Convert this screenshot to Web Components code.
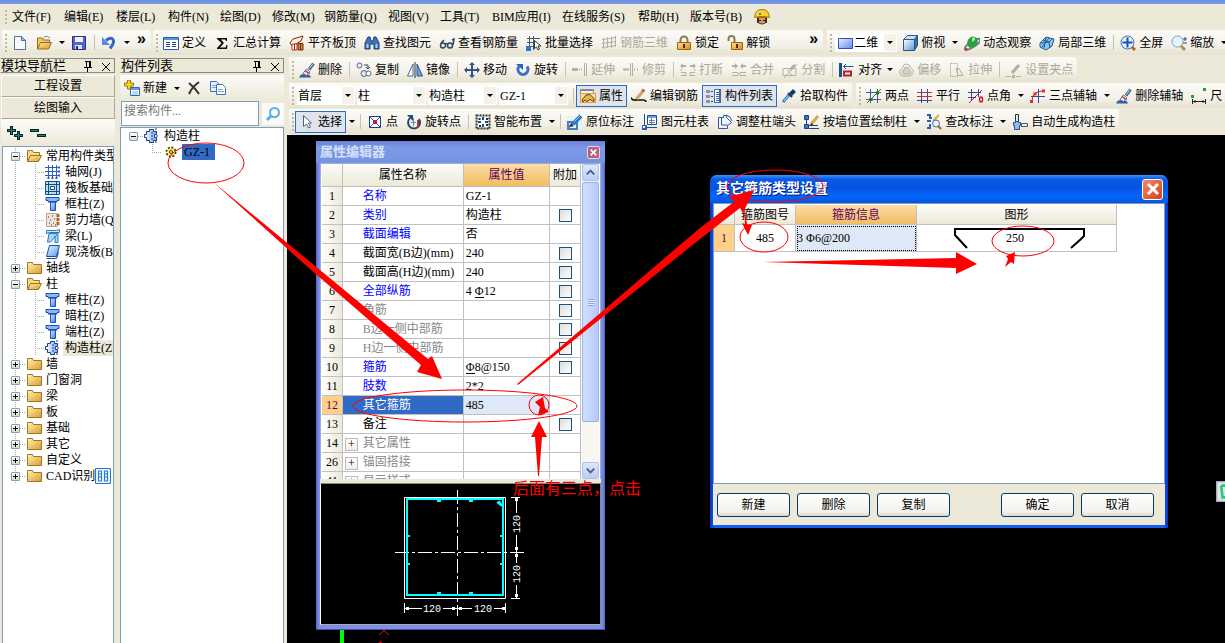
<!DOCTYPE html>
<html lang="zh-CN">
<head>
<meta charset="utf-8">
<title>钢筋算量</title>
<style>
html,body{margin:0;height:100%}
body{font:12px/16px "Liberation Serif","Noto Sans CJK SC",serif;color:#000;background:#ece9d8;overflow:hidden}
</style>
</head>
<body>
<rebar-app></rebar-app>
<script>
const define = (name, css, html) => customElements.define(name, class extends HTMLElement {
  connectedCallback() {
    if (this.shadowRoot) return;
    const t = document.createElement('template');
    t.innerHTML = `<style>*{box-sizing:border-box}button,input,select{font:inherit;color:inherit;margin:0}${css}</style>` + (typeof html === 'function' ? html(this) : html);
    this.attachShadow({mode: 'open'}).append(t.content.cloneNode(true));
  }
});

const grad = (id, a, b, x2 = 1, y2 = 1) => `<linearGradient id="${id}" x2="${x2}" y2="${y2}"><stop stop-color="${a}"/><stop offset="1" stop-color="${b}"/></linearGradient>`;
const l = (d, c = '#333', w = 1, extra = '') => `<path d="${d}" fill="none" stroke="${c}" stroke-width="${w}" ${extra}/>`;
const f = (d, c, s = 'none') => `<path d="${d}" fill="${c}" stroke="${s}"/>`;
const G = '#b3b0a3';
const brush = f('M0 15.500h12l-1-2-4-1.500-5 .500z', '#2b5f9e') + f('M4 11.500l3.500-4.500 3.500 3-3.500 3.500z', '#e9eef7', '#5577a8') + l('M10 7.500l4.500-6', '#3d5f96', 3) + l('M10.500 6.500l3.500-5', '#f0d9a8', 1) + l('M6 8.500l4.500 3.500', '#c33', 1.5);
const column = grad('c', '#dcecff', '#3a7be0') + f('M1 1.500h13v3H12v1H3v-1H1z', '#8ab8f6', '#1c50b8') + f('M5.500 6h5v8.500h-5z', 'url(#c)', '#1c50b8') + l('M3 6h9', '#1c50b8');
const pillar = grad('p', '#ffffff', '#7aa7ea', 1, 0) + f('M5.500 1.500h4v2h3v3h-2v3h2v3h-3v2h-4v-2h-3v-3h-2v-3h2v-3h3z', 'url(#p)', '#173f8e') + l('M11 1h3M12 8h3M11 14h3M8 4v8', '#173f8e', 1, 'stroke-dasharray="2 1"');
const icons = {
  doc: f('M2.500 1.500h7l4 4v9h-11z', '#f4f8ff', '#56708f') + f('M9.500 1.500v4h4z', '#9cc1e8', '#56708f'),
  open: grad('o', '#ffe9a0', '#e0962a') + f('M1.500 14V3h5l1 2h6v3', '#f3c968', '#9a6a1c') + f('M1.500 14l3-6.500h11l-3 6.500z', 'url(#o)', '#9a6a1c') + l('M8 2q4-2 6 1', '#5a7ec4', 1),
  save: f('M1.500 1.500h13v13h-13z', '#5265d6', '#28308c') + f('M4 2h8v5H4z', '#eef1ff') + f('M4 10h7v4H4z', '#dfe3f2') + f('M5 11h2v3H5z', '#333'),
  undo: l('M5 5.500q5-4 7-1t-3 9', '#3567d0', 3) + f('M1 2v8h8z', '#5b8ae6'),
  define: f('M.500 2.500h15v12H.500z', '#fff', '#2a5cb0') + f('M1 3h14v2H1z', '#5a92e2') + l('M3 7.500h4M9 7.500h4M3 9.500h4M9 9.500h4M3 11.500h4M9 11.500h4', '#24457d'),
  sum: `<path d="M3 3h10v3h-1l-1-1.500H7L10 8l-4 4.500h5.500L12.500 10h1l-.500 4H3v-1l4.500-5L3 4z" fill="#111"/>`,
  slab: f('M1 8l3-4 10-3-2 5-9 5z', '#fff2dc', '#7c2c12') + f('M3 9h5v6H3z', '#fff', '#c03018') + f('M9 8.500h5v6.500H9z', '#d9882c', '#6b2b10') + l('M5.500 9v6M11.500 9v6', '#632'),
  binoc: f('M1 14V8l3-6h2l1 4h2l1-4h2l3 6v6h-5V9H6v5z', '#3f74bd', '#163b72') + f('M2.500 9h2v4h-2zM11.500 9h2v4h-2z', '#a9cdf2'),
  glasses: l('M1.500 10.500a2.500 2.500 0 1 0 5 0a2.500 2.500 0 0 0-5 0M8.500 10.500a2.500 2.500 0 1 0 5 0a2.500 2.500 0 0 0-5 0M14 10l1-6-2 1M6 9q1.500-1 3 0M2 8l3-3', '#31455e', 1.5),
  batch: l('M3.500 1v14M7.500 1v14M1 3.500h13M1 7.500h7M3 11.500h6', '#456') + f('M0 11h5v5H0z', '#2c74d6') + f('M8.500 5.500v8l2-1.500 1.500 3 1.500-1-1.500-3h3z', '#fff', '#333'),
  rebar3d: l('M2.500 3v11M6.500 2v11M10.500 2v11M14.500 1v11M1 4.500l14-2M1 8.500l14-2M1 12.500l14-2', G),
  lock: l('M4.500 8V5a3.500 3.500 0 0 1 7 0v3', '#8c7a55', 2) + grad('k', '#ffe38a', '#d98a17') + f('M1.500 7.500h13v7h-13z', 'url(#k)', '#9b6414') + f('M7 9h2v4H7z', '#4b2e05'),
  unlock: l('M1.500 6V4a3 3 0 0 1 6 0v3', '#8c7a55', 2) + grad('k', '#ffe38a', '#d98a17') + f('M4.500 7.500h11v7h-11z', 'url(#k)', '#9b6414') + f('M9 9h2v4H9z', '#4b2e05'),
  rect2d: grad('r', '#e8f2ff', '#5b8be6') + f('M.500 3.500h14v10H.500z', 'url(#r)', '#2b55b8'),
  cube: f('M1.500 4.500l4-4h10l-3 4z', '#c8e4f8', '#2c5580') + f('M12.500 4.500l3-4v10l-3 5z', '#3a6fa3', '#2c5580') + grad('q', '#fff', '#5a97d4') + f('M1.500 4.500h11v11h-11z', 'url(#q)', '#2c5580'),
  orbit: l('M1 15q-1-4 6-8t9-3q1 3-5 7t-10 4', '#6c7a94', 2) + `<ellipse cx="8.500" cy="7" rx="5" ry="6" fill="#2aa040" transform="rotate(30 8 7)"/>` + f('M8 3l3-1 0 3-3 2z', '#9bf0a0') + f('M0 14l4-1-2 3z', '#d22'),
  local3d: f('M1 8l6-6 8 2-2 7-6 4-6-3z', '#8cc4ea', '#1e5d96') + l('M4 5l6 2 1 6M7 2l-2 11M10 3L3 12M13 4l-3 3-8 1', '#1e5d96'),
  full: `<circle cx="7.500" cy="7.500" r="6.500" fill="#e3f0ff" stroke="#4a6fa8"/>` + l('M7.500 2.500v10M2.500 7.500h10', '#1d4fa8', 2) + l('M12 12l3 3', '#a06a30', 3),
  zoom: `<circle cx="6.500" cy="6.500" r="5.500" fill="#e3f4ff" stroke="#7b9cc6"/>` + l('M10 11l4 4', '#c98a3c', 3) + l('M12 4h4M14 2v4M12 8h4', '#27488b'),
  brush,
  copy2: `<circle cx="3.500" cy="3.500" r="2.500" fill="#eef" stroke="#4b6584"/><circle cx="8" cy="11.500" r="3" fill="#dfe9f5" stroke="#4b6584"/><circle cx="12.500" cy="11.500" r="2.500" fill="#fff" stroke="#4b6584"/>` + l('M8 3h4v4M10 5l2 2 2-2', '#345'),
  mirror: f('M6 2v12H.500z', '#fff', '#3a6ea8') + f('M10 2v12h5.500z', '#6fa0da', '#2a558f') + l('M8 0v16', '#333'),
  move: l('M8 1v14M1 8h14', '#2f5685', 2) + f('M8 0l3 3H5zM8 16l3-3H5zM0 8l3-3v6zM16 8l-3-3v6z', '#2f5685'),
  rotate: l('M4 4.500a5 5 0 1 0 8 0', '#3b70c8', 3) + f('M1 2h7v6z', '#2f60b8'),
  extend: l('M0 7.500h6', G, 3) + l('M7 7.500h3', G, 2, 'stroke-dasharray="1 1"') + l('M12.500 1v13M14.500 1v13', G),
  trim: l('M0 7.500h6M11 7.500h1M14 7.500h1', G, 2) + l('M7.500 1v13M9.500 1v13', G),
  brk: l('M1 10.500h5v3H1M15 10.500h-5v3h5M1 7v2M15 7v2', G) + l('M1 4h5M10 4h5', G, 2) + f('M0 4l3-3v6zM16 4l-3-3v6z', G),
  merge: l('M1 10.500h6v3H1M15 10.500H9v3h6', G) + l('M1 4h4M11 4h4', G, 2) + f('M7 4L4 1v6zM9 4l3-3v6z', G),
  split: l('M1 13.500V6.500h13v7zM2 16L15 2M5 8l6 6', G) + l('M8 8l5-5', G, 3),
  align: f('M0 1h3v14H0z', '#1d4d85') + l('M4.500 4.500h10M7 2L4.500 4.500 7 7', '#24529c') + l('M5 9.500h7v4H5z', '#b61f2d', 2),
  offset: l('M1.500 10q0-3 3-4 0-4 4-4t4 4q3 1 3 4t-4 4h-6q-4 0-4-4z', G) + f('M4 10q0-2 2-2 0-3 2.500-3T11 8q2 0 2 2.500T10 12H6q-2 0-2-2z', '#d4d1c6', G),
  stretch: l('M1.500 1.500h7v13h-7z', G, 1, 'stroke-dasharray="2 1"') + l('M7 6.500h3l4 7H9z', G),
  grip: l('M0 14.500h5M10 14.500h5', G) + f('M6 13h3v3H6z', G) + l('M6 11l7-8', G, 3),
  props: f('M.500 1.500h13v4H.500z', '#f4f4f4', '#8d8d8d') + l('M1 2.500h12', '#5c84c0') + f('M.500 5.500h15v9H.500z', '#ffdf9e', '#e8973a') + f('M2 12l4-5 4-.500 4 4v3l-4-2-3 2-2-1.500-2 2z', '#e4b94c', '#5a4212'),
  editbar: l('M0 9.500q1 3 4 2.500h8q3 0 3 2', '#111', 1.5) + l('M5.500 11l6.500-8', '#caa566', 3) + l('M11.500 3.500l1.500-2', '#c9564a', 3) + f('M3.500 13.500l.5-3 2 1.500z', '#222'),
  list: l('M.500 3.500h3M.500 8.500h3M.500 13.500h3', '#345', 3, 'stroke-dasharray="1 1"') + l('M5 3.500h2M5 8.500h2M5 13.500h2', '#345') + f('M8.500 1.500h6v13h-6z', '#fff', '#3c6ba8') + f('M13 1h2v14h-2z', '#3c6ba8') + l('M10 4.500h3M10 6.500h3M10 8.500h3M10 10.500h3M10 12.500h3', '#3c6ba8'),
  dropper: l('M2 14l6-7', '#3d80c6', 3) + l('M7 5l4 4', '#17396a', 2) + l('M9.500 6.500l4-4', '#17396a', 4) + l('M3 13l4-5', '#b9dcf7', 1),
  axis2: l('M4.500 1v14M11.500 1v14M0 4.500h15M0 11.500h15', '#4a5a9a') + l('M1 15L15 1', '#2b7a2b', 1) + f('M3.500 10h3v3h-3zM10 3.500h3v3h-3z', '#1c7a1c'),
  axisp: l('M4.500 1v14M10.500 1v14', '#344a96') + l('M0 4.500h15M0 8.500h15', '#c92a35') + l('M0 12.500h15', '#344a96'),
  axisa: l('M3.500 1v12M10.500 1v8M0 4.500h13M0 9.500h8', '#344a96') + l('M1 15L14 2', '#b32330') + `<ellipse cx="13" cy="11.500" rx="1.500" ry="2.500" fill="#fff" stroke="#c01a28" stroke-width="1.500"/>`,
  axis3: l('M8.500 1v14M1 8.500h14', '#344a96') + l('M2 13Q2 3 13 3', '#c9202c', 1) + f('M0 12h3v3H0zM12 1.500h3v3h-3zM3.500 4.500h3v3h-3z', '#d3303a'),
  ruler: f('M12 0h3v3h-3zM0 7h3v3H0z', '#2aa52a') + l('M1.500 11v5M14.500 11v5M2 13.500h12M4 12v3M12 12v3', '#222'),
  cursor: f('M4.500 1.500v11l3-2.500 2 4 2-1-2-4h3z', '#fff', '#4d6280'),
  point: f('M2.500 2.500h11v11h-11z', '#fff', '#1c3c90') + l('M3 3l10 10M13 3L3 13', '#2a50b0', 1) + f('M6 6h4v4H6z', '#b32048'),
  rotpt: l('M4 4a6 6 0 1 0 9 1', '#25496f', 2) + f('M1 1h6v6z', '#25496f') + l('M7.500 4v8M5 8.500h5', '#5d86b0') + l('M12 6v7', '#c02b3b', 2),
  smart: l('M1.500 1.500h13v13h-13z', '#333', 2, 'stroke-dasharray="2 1"') + f('M3 3h10v10H3z', '#fff') + l('M8 3v3M8 10v3M3 8h3M10 8h3', '#1b4f9c', 2) + f('M3.500 4h2v2h-2zM11 4h2v2h-2zM4 11h2v2H4zM11 10h2v2h-2z', '#233'),
  insitu: f('M0 2h15v14H0z', '#e6f1fb') + l('M1 8h9v7H1zM1 14l9-9', '#4a7fb8', 2) + l('M6 10l8-8', '#2e78cc', 4) + l('M7 8l7-7', '#8fc3f2', 1) + f('M3 13l1-4 3 3z', '#123a6c'),
  coltable: l('M2.500 0v11M5 13.500h10', '#234e8e') + f('M0 11h5v5H0z', '#2d5cb8') + f('M1 12h2v2H1z', '#fff') + f('M5.500 1.500h9v9h-9z', '#fff', '#234e8e') + f('M6 2h8v2H6z', '#72a2e4') + l('M7 6.500h6M7 8.500h6M9.500 4v6', '#6481b3'),
  colend: f('M1.500 3.500h5v-2h3v2l5 5-4 3v3h-9z', '#eef5fd', '#2d5c9e') + l('M9 1q5 1 6 6M4.500 4v7h6', '#2d5c9e'),
  wallcol: f('M.500 1.500h4v4h-4zM.500 10.500h4v4h-4z', '#4274bd', '#1d3f7c') + l('M2.500 5v6M5 14.500h10M5 11.500h9', '#1d3f7c', 1) + l('M8 9l6-7', '#d9a848', 3) + f('M6 12l1-3.500 2.500 2z', '#333'),
  check: l('M1 1h3v3h2M1 14h3v-4M1 7h4', '#2a5eb0', 2) + l('M7 7l6-6', '#d9a848', 2) + `<circle cx="10" cy="9.500" r="3.500" fill="#e5f5ff" stroke="#3f6f9c"/>` + l('M12 12l3 3', '#9b5a28', 2),
  autocol: f('M3.500.500h3v7h-3z', '#dceafa', '#333') + f('M1.500 8.500h2v-1h3v1h2v3h-1v4h-5v-4h-1z', '#8fbcf0', '#284f8a') + f('M9.500 9.500h6v3h-6z', '#eee', '#555'),
  helmet: f('M3.500 8h9v5q-4.500 4-9 0z', '#d99a6e', '#5a3320') + f('M3 9h2v5H3zM11 9h2v5h-2z', '#4b2a1a') + f('M.500 8.500Q1 .500 8 .500t7.500 8q-4-1-7.500-1t-7.500 1z', '#ffd42a', '#a87900') + f('M5 4h2v2H5z', '#2d7cd0') + f('M5 11h2v1H5zM9 11h2v1H9z', '#222'),
  newitem: f('M6.500 7.500h9v8h-9z', '#fff', '#2c64b8') + f('M7 8h8v2H7z', '#5c9aec') + l('M8 12h6M8 14h6', '#82a9d8') + f('M3.500 0h3v3h3v3h-3v3h-3V6h-3V3h3z', '#f7d327', '#9a7a10'),
  del: l('M3 3q6 5 10 11M13 2Q6 7 3 14', '#333', 2),
  pages: f('M.500 1.500h6l3 3v7h-9z', '#e4f0ff', '#3f72ba') + f('M6.500 4.500h6l3 3v7h-9z', '#fff', '#3f72ba') + l('M2 5.500h4M2 7.500h4M8 9.500h5M8 11.500h6', '#7ca2d8'),
  search: `<circle cx="9.500" cy="6.500" r="4.500" fill="#fff" stroke="#58aee6" stroke-width="2"/>` + l('M6 10l-4 4', '#58aee6', 3),
  pin: f('M5 3h6v1H5zM6 4h1v5H6zM9 4h2v5H9zM4 9h8v1H4zM7 10h1v4H7z', '#000'),
  x: l('M4 5l8 8M12 5l-8 8', '#000'),
  folder: grad('fo', '#fff3b5', '#d99c2b') + f('M1.500 2.500h5l1 2h8v9h-14z', 'url(#fo)', '#a37420'),
  foldero: f('M1.500 13.500v-11h5l1 2h6v3', '#f6dc86', '#a37420') + grad('fp', '#fff3b5', '#d99c2b') + f('M1.500 13.500l3-6h11l-3 6z', 'url(#fp)', '#a37420'),
  grid: l('M3.500 1v12M7.500 1v12M11.500 1v12M0 3.500h13M0 7.500h13M0 11.500h13', '#2d5fc0', 1) + f('M13 2.500h2v2h-2zM13 6.500h2v2h-2zM13 10.500h2v2h-2zM2.500 13h2v2h-2zM6.500 13h2v2h-2zM10.500 13h2v2h-2z', '#2d5fc0'),
  raft: f('M.500 1.500h14v13H.500z', '#bcdcf4', '#114f80') + l('M3.500 1v14M11.500 1v14M0 4.500h15M0 11.500h15', '#114f80', 1) + f('M5.500 6.500h4v3h-4z', '#fff', '#114f80'),
  column, pillar,
  wall: f('M1.500 1.500h11v13h-11z', '#eee6de', '#caa08a') + l('M3 5h1M7 4h1M5 8h1M9 7h1M4 11h1M8 11h1M10 13h1M6 13h1', '#333') + l('M13 2v12', '#b4642e', 3, 'stroke-dasharray="3 1"'),
  beam: f('M1.500 2.500h10l3-1v3h-10l-3 1z', '#cfe6fb', '#2b7bc0') + f('M4 5.500L2.500 14h3L13 5.500zM10 8v6.500h3V6', '#a9d4f5', '#2b7bc0'),
  slabi: grad('s', '#eaf7ff', '#4e9be8') + f('M4.500 1.500h10l-3 11h-10z', 'url(#s)', '#174f98') + l('M1.500 14.500h10l2-6', '#174f98'),
  gear: `<circle cx="9" cy="8" r="4.500" fill="none" stroke="#4a4200" stroke-width="2" stroke-dasharray="2 1.500"/><circle cx="9" cy="8" r="3.500" fill="#ffef2e"/><circle cx="9" cy="8" r="1.500" fill="#fff" stroke="#333"/>`,
  columns: f('M.500.500h15v15H.500z', '#e4f2ff', '#2876c8') + l('M3.500 3v10h3V3zM9.500 3v10h3V3zM4 6h2M4 9h2M10 6h2M10 9h2', '#2876c8'),
  plusplus: l('M4.500 1v9M0 5.500h9M11.500 6v9M7 10.500h9', '#06211f', 3) + l('M4.500 2v7M1 5.500h7M11.500 7v7M8 10.500h7', '#0f8c7e', 1),
  minusminus: l('M0 5.500h9M7 10.500h9', '#06211f', 3) + l('M1 5.500h7M8 10.500h7', '#0f8c7e', 1),
  wx: l('M3 3l10 10M13 3L3 13', '#fff', 3),
  up2: l('M4 10l4-4 4 4', '#4d6185', 2), down2: l('M4 6l4 4 4-4', '#4d6185', 2),
  recycle: f('M.500.500h15v15H.500z', '#dfe5ea', '#aab') + l('M12 3.500H5l-1 1 1 8h7', '#29cc72', 2) + l('M7 8h5', '#29cc72', 2)
};
define('ui-icon', ':host{display:block;flex:none;width:16px;height:16px}svg{display:block;width:100%;height:100%}',
  h => `<svg viewBox="0 0 16 16" aria-hidden="true">${icons[h.getAttribute('name')] || ''}</svg>`);

define('tool-strip', `:host{display:flex;align-items:center;height:25px;padding-left:3px;border-radius:0 3px 3px 0;background:linear-gradient(#fcfbf8,#f3f1e8 60%,#e6e2d0);flex:none}
:host([grow]){flex:1 0 auto;margin-left:2px}.g{width:2px;height:18px;margin-right:1px;background:repeating-linear-gradient(#bdb9a6 0 2px,transparent 2px 4px)}`, '<span class="g"></span><slot></slot>');
define('tool-button', `:host{display:block;flex:none}button{display:flex;align-items:center;gap:3px;height:22px;padding:0 3px;border:1px solid transparent;background:none;white-space:nowrap}
button:disabled{color:#aca899}:host([pressed]) button{border-color:#316ac5;background:#dfe4ec}`,
  h => `<button ${h.hasAttribute('off') ? 'disabled' : ''} aria-label="${h.textContent || h.title}"><ui-icon name="${h.getAttribute('icon')}"></ui-icon><slot></slot></button>`);
define('tool-sep', ':host{flex:none;width:6px;height:15px;background:linear-gradient(#c5c2b2,#c5c2b2) 3px 0/1px 100% no-repeat}', '');
define('tool-arrow', `:host{flex:none;width:11px}:host([tight]){width:8px}button{display:block;width:100%;height:22px;padding:0;border:0;background:none}
i{display:block;margin:0 auto;width:0;border:3px solid transparent;border-top-color:#000;border-bottom:0}`, '<button aria-label="展开"><i></i></button>');
define('tool-more', ':host{flex:none;width:19px;text-align:center;height:24px}:host([wide]){width:49px;text-align:right;padding-right:5px;box-sizing:border-box}b{font:bold 16px/16px "Liberation Sans",sans-serif}', '<b>»</b>');
define('tool-combo', `:host{display:flex;align-items:center;position:relative;flex:none;width:69px;height:19px;margin-right:2px;background:linear-gradient(90deg,#fff calc(100% - 12px),#f3f1e8 0);border:1px solid #fff}
:host([first]){width:58px;margin-left:2px}:host([icon]){width:62px;margin:0 1px 0 2px;padding-left:2px}
select{appearance:none;border:0;background:none;width:100%;height:17px;padding:0;outline:0}
i{position:absolute;right:3px;top:7px;border:3px solid transparent;border-top-color:#000;border-bottom:0;pointer-events:none}`,
  h => `${h.hasAttribute('icon') ? `<ui-icon name="${h.getAttribute('icon')}"></ui-icon>` : ''}<select aria-label="${h.getAttribute('value')}"><option>${h.getAttribute('value')}</option></select><i></i>`);

define('menu-bar', `:host{display:flex;align-items:center;gap:10px;height:26px;padding-left:5px}
.g{width:2px;height:15px;margin-right:-5px;background:repeating-linear-gradient(#bdb9a6 0 2px,transparent 2px 4px)}
button{width:42px;padding:0;border:0;background:none;text-align:left;white-space:nowrap}.m{width:54px}.l{width:60px}.xl{width:66px}`,
  () => '<span class="g"></span>' + ['文件(F)', '编辑(E)', '楼层(L)', '构件(N)', '绘图(D)', '修改(M)', '钢筋量(Q)', '视图(V)', '工具(T)', 'BIM应用(I)', '在线服务(S)', '帮助(H)', '版本号(B)']
    .map(t => `<button class="${t.length === 6 ? 'm' : t.startsWith('BIM') ? 'l' : t.length === 7 ? 'xl' : ''}">${t}</button>`).join('') + '<ui-icon name="helmet"></ui-icon>');

define('dock-title', `:host{display:flex;align-items:center;height:15px;margin-top:1px;border:1px solid #8c8a80;border-left-color:#ece9d8;font-size:13px;overflow:hidden;white-space:nowrap}
ui-icon{margin-left:2px}span{flex:1}`, '<span><slot></slot></span><ui-icon name="pin"></ui-icon><ui-icon name="x"></ui-icon>');

define('tree-item', `:host{display:flex;align-items:center;height:16px;padding-left:8px;white-space:nowrap;background:repeating-linear-gradient(#aaa 0 1px,transparent 1px 2px) 12px 0/1px 100% no-repeat}
:host([child]){padding-left:32px;background:repeating-linear-gradient(#aaa 0 1px,transparent 1px 2px) 12px 0/1px 100% no-repeat,repeating-linear-gradient(#aaa 0 1px,transparent 1px 2px) 32px 0/1px 100% no-repeat}
:host([solo]){background:none}
:host([solo][child]){padding-left:31px;background:repeating-linear-gradient(#aaa 0 1px,transparent 1px 2px) 31px 0/1px 50% no-repeat}
button{width:9px;height:9px;padding:0;border:1px solid #7f9db9;border-radius:1px;background:linear-gradient(#fff,#ddd8cb);position:relative;flex:none}
button:before,button.p:after{content:"";position:absolute;left:1px;right:1px;top:3px;height:1px;background:#000}button.p:after{left:3px;right:auto;width:1px;top:1px;height:5px}
.d{flex:none;width:6px;height:1px;background:repeating-linear-gradient(90deg,#aaa 0 1px,transparent 1px 2px)}:host([child]) .d{width:10px}
ui-icon{margin-right:2px}span{padding:0 2px;display:flex}:host([sel]) span{background:#ece9d8;flex:1}:host([active]) span{background:#316ac5;padding-right:5px;margin-left:2px}`,
  h => `${h.hasAttribute('child') ? '' : `<button class="${h.hasAttribute('open') ? '' : 'p'}" aria-label="展开折叠"></button>`}<i class="d"></i><ui-icon name="${h.getAttribute('icon')}"></ui-icon><span><slot></slot></span>`);

define('nav-panel', `:host{display:flex;flex-direction:column;width:117px;padding-right:2px;box-sizing:border-box;overflow:hidden}
.b{height:22px;margin-left:1px;width:114px;border:1px solid #fff;border-bottom-color:#aca899;border-right-color:#aca899;background:#ece9d8;padding:0;flex:none}.b:first-of-type{margin-top:2px}
.t{display:flex;align-items:center;gap:7px;height:27px;padding-left:6px;margin-left:1px;background:linear-gradient(#fcfbf8,#ece9d8);flex:none}
.tree{flex:1;margin-left:2px;width:112px;box-sizing:border-box;background:#fff;border:1px solid #7f9db9;border-bottom:0;padding-top:1px;overflow:hidden}`,
  () => `<dock-title>模块导航栏</dock-title><button class="b">工程设置</button><button class="b">绘图输入</button><div class="t"><ui-icon name="plusplus"></ui-icon><ui-icon name="minusminus"></ui-icon></div><div class="tree">` +
  [['foldero', '常用构件类型', 'open'], ['grid', '轴网(J)', 'child'], ['raft', '筏板基础', 'child'], ['column', '框柱(Z)', 'child'], ['wall', '剪力墙(Q', 'child'], ['beam', '梁(L)', 'child'], ['slabi', '现浇板(B', 'child'],
   ['folder', '轴线', ''], ['foldero', '柱', 'open'], ['column', '框柱(Z)', 'child'], ['column', '暗柱(Z)', 'child'], ['column', '端柱(Z)', 'child'], ['pillar', '构造柱(Z', 'child sel'],
   ['folder', '墙', ''], ['folder', '门窗洞', ''], ['folder', '梁', ''], ['folder', '板', ''], ['folder', '基础', ''], ['folder', '其它', ''], ['folder', '自定义', ''], ['folder', 'CAD识别<ui-icon name="columns"></ui-icon>', '']]
    .map(([i, t, a]) => `<tree-item icon="${i}" ${a}>${t}</tree-item>`).join('') + '</div>');

define('list-panel', `:host{display:flex;flex-direction:column;width:170px;padding:0 3px;box-sizing:border-box;overflow:hidden}
.t{display:flex;align-items:center;height:26px;margin-top:2px;background:linear-gradient(#fcfbf8,#ece9d8);flex:none}
.s{display:flex;height:25px;align-items:center;margin-bottom:1px;flex:none}input{width:138px;height:25px;margin-left:1px;border:1px solid #7f9db9;background:#fff;padding:0 2px 4px;outline:0}input::placeholder{color:#777;opacity:1}
.s button{border:0;background:#fbfaf6;padding:3px;margin-left:3px;height:22px}
.tree{flex:1;background:#fff;border:1px solid #7f9db9;border-bottom:0}`,
  `<dock-title>构件列表</dock-title><div class="t"><tool-button icon="newitem">新建</tool-button><tool-arrow></tool-arrow><tool-button icon="del" title="删除"></tool-button><tool-button icon="pages" title="复制"></tool-button></div>
<div class="s"><input type="text" placeholder="搜索构件..." aria-label="搜索构件"><button aria-label="搜索"><ui-icon name="search"></ui-icon></button></div>
<div class="tree"><tree-item solo open icon="pillar">构造柱</tree-item><tree-item solo child active icon="gear">GZ-1</tree-item></div>`);

const cellCss = `table{border-collapse:separate;border-spacing:0;table-layout:fixed}td,th{padding:0;border:solid #c0c0c0;border-width:0 1px 1px 0;font-weight:normal;white-space:nowrap;overflow:hidden;line-height:16px}
thead th{background:linear-gradient(#fdfcf8,#ece9d8)}thead th.on{background:linear-gradient(#fbdca4,#f0bd62);color:#600060}tbody th{background:linear-gradient(90deg,#fff,#ece9d8)}tbody th.on{background:#ffd08a;color:#600060}.dia{display:inline-block;width:9px;text-align:center;line-height:11px}.u{border-bottom:1px solid #000}`;
const D = '<span class="dia u">Φ</span>';
const props = [[1, '名称', 'b', 'GZ-1', 0], [2, '类别', 'b', '构造柱', 1], [3, '截面编辑', 'b', '否', 0], [4, '截面宽(B边)(mm)', '', '240', 1], [5, '截面高(H边)(mm)', '', '240', 1], [6, '全部纵筋', 'b', `4 ${D}12`, 1],
  [7, '角筋', 'g', '', 1], [8, 'B边一侧中部筋', 'g', '', 1], [9, 'H边一侧中部筋', 'g', '', 1], [10, '箍筋', 'b', `${D}8@150`, 1], [11, '肢数', 'b', '2*2', 0], [12, '其它箍筋', 'sel', '485', 0], [13, '备注', '', '', 1],
  [14, '其它属性', 'g plus', '', 0], [26, '锚固搭接', 'g plus', '', 0], [41, '显示样式', 'g plus', '', 0]];
define('property-editor', `:host{display:flex;flex-direction:column;width:289px;box-sizing:border-box;padding:0 4px 4px;background:linear-gradient(90deg,#5864c4,#7b8fe4 1% 99%,#5864c4);border-bottom:1px solid #4450b0}
header{display:flex;align-items:center;justify-content:space-between;height:22px;margin:0 -4px;padding:0 5px 0 4px;background:linear-gradient(#6a80d6,#7c9ae6 30%,#7693e2);color:#d5e2fa;font-weight:bold;font-size:13px}
header button{width:13px;height:13px;padding:0;border:1px solid #e9d5e2;border-radius:2px;background:#b9627e;display:grid;place-items:center}header ui-icon{width:9px;height:9px}
.pane{display:flex;height:317px;background:#fff;border:1px solid #9ab0cc;padding:0 1px;overflow:hidden}
.bar{width:17px;display:flex;flex-direction:column;background:#f7f6f0;margin-left:1px}.bar button{width:17px;height:17px;padding:0;border:1px solid #aebfe8;border-radius:2px;background:linear-gradient(#dce7ff,#bccdf8);flex:none}.bar button ui-icon{width:15px;height:15px}
.thumb{height:240px;margin:1px 0;border:1px solid #98b0e4;border-radius:2px;background:linear-gradient(90deg,#d0dffe,#b6caf8);display:grid;place-items:center}.thumb i{width:6px;height:7px;background:repeating-linear-gradient(#8ea6dc 0 1px,#eef 1px 2px)}.sp{flex:1}
.gap{height:4px;background:#ece9d8;margin-top:-1px}.draw{height:142px;background:#000;border:1px solid #fff;border-color:#888 #888 #aaa #fff}svg{display:block}
${cellCss}thead tr{height:23px}tbody tr{height:19px}tbody td:nth-child(2){padding-left:20px}td:nth-child(3){padding-left:2px}.b{color:#00f}.g{color:#888}
tr.r td.sel{background:#316ac5;color:#fff}tr.r td:nth-child(3){background:#dfe8f6}td.plus{padding-left:2px!important}.plus button{width:13px;height:13px;margin:0 5px 0 0;padding:0;border:1px solid #bbb;background:linear-gradient(#fff,#eee);color:#000;line-height:10px;vertical-align:middle}
input{display:block;appearance:none;width:13px;height:13px;margin:0 auto;border:1px solid #1c5180;background:linear-gradient(135deg,#dcdcd7,#fff)}`,
  () => `<header><span>属性编辑器</span><button aria-label="关闭"><ui-icon name="wx"></ui-icon></button></header>
<div class="pane"><div><table><colgroup><col style="width:21px"><col style="width:121px"><col style="width:87px"><col style="width:31px"></colgroup><thead><tr><th></th><th>属性名称</th><th class="on">属性值</th><th>附加</th></tr></thead><tbody>` +
  props.map(([n, a, c, v, k]) => `<tr class="${c === 'sel' ? 'r' : ''}"><th class="${c === 'sel' ? 'on' : ''}">${n}</th><td class="${c}">${c.includes('plus') ? '<button aria-label="展开">+</button>' : ''}${a}</td><td>${v}</td><td>${k ? `<input type="checkbox" aria-label="附加 ${a}">` : ''}</td></tr>`).join('') +
  `</tbody></table></div><div class="bar"><button aria-label="向上"><ui-icon name="up2"></ui-icon></button><div class="thumb"><i></i></div><span class="sp"></span><button aria-label="向下"><ui-icon name="down2"></ui-icon></button></div></div><div class="gap"></div>
<div class="draw"><svg width="279" height="140" fill="none" stroke="#fff" font-family="Liberation Mono,monospace" font-size="10">
<path d="M83.500 13.500h101v101h-101z"/><path d="M136.500 6v126" stroke-dasharray="14 3 3 3"/><path d="M74 68.500h130" stroke-dasharray="14 3 3 3"/>
<path d="M86 15h96v96h-96z" stroke="#0ff" stroke-width="2"/><path d="M176 18l5 4M178 17l3 5" stroke="#0ff" stroke-width="2"/><path d="M116 17h4M148 17h4M116 109h4M148 109h4M87 52h2M87 80h2M179 52h3M179 80h3" stroke="#0ff" stroke-width="2"/>
<path d="M195.500 13v16M195.500 51v28M195.500 101v14M190 13.500h9M190 114.500h9M83.500 119v10M184.500 119v10M84 124.500h17M122 124.500h29M173 124.500h11"/><path d="M195.500 14v3M195.500 63v3M195.500 70v3M195.500 110v3M85 124.500h3M131 124.500h3M138 124.500h3M181 124.500h3" stroke-width="3"/>
<g fill="#fff" stroke="none"><text x="102" y="128">120</text><text x="153" y="128">120</text><text transform="translate(199 49) rotate(-90)">120</text><text transform="translate(199 99) rotate(-90)">120</text></g></svg></div>`);

define('stirrup-dialog', `:host{display:flex;flex-direction:column;width:458px;box-sizing:border-box;padding:0 3px 3px;border-radius:7px 7px 0 0;background:linear-gradient(90deg,#0831c8,#1560f0 1% 99%,#0831c8)}
header{display:flex;align-items:center;justify-content:space-between;height:28px;margin:0 -3px;padding:0 5px 0 6px;border-radius:7px 7px 0 0;background:linear-gradient(#3a92fd,#0a5ae6 15%,#0553e0 45%,#0466fd 75%,#0355e0);color:#fff;font-weight:bold;font-size:14px;text-shadow:1px 1px #0a1883}
header button{width:21px;height:21px;padding:0;border:1px solid #fff;border-radius:3px;background:linear-gradient(135deg,#f08a66,#d8401c);display:grid;place-items:center}
.pane{height:281px;background:#fff;border:1px solid #7f9db9;padding-top:1px}
footer{display:flex;gap:7px;height:41px;padding:9px 11px 0 4px;background:#ece9d8;box-sizing:border-box}footer button{width:73px;height:24px;border:1px solid #003c74;border-radius:3px;background:linear-gradient(#fff,#f3f2ec 80%,#dcd8cb);padding:0}
.ok{margin-left:auto}${cellCss}thead tr{height:20px}tbody tr{height:27px}td{text-align:center}td.v{text-align:left;background:#dfe8f6;outline:1px dotted #000;outline-offset:-2px;padding-left:1px}svg{display:block}`,
  `<header><span>其它箍筋类型设置</span><button aria-label="关闭"><ui-icon name="wx"></ui-icon></button></header>
<div class="pane"><table><colgroup><col style="width:21px"><col style="width:61px"><col style="width:121px"><col style="width:200px"></colgroup><thead><tr><th></th><th>箍筋图号</th><th class="on">箍筋信息</th><th>图形</th></tr></thead>
<tbody><tr><th class="on">1</th><td>485</td><td class="v">3 <span class="dia">Φ</span>6@200</td><td><svg width="199" height="26" viewBox="0 0 199 26"><path d="M50 23L38 10V4h129v7l-3 3-10 9" fill="none" stroke="#000" stroke-width="2"/><text x="89" y="17" font-size="12">250</text></svg></td></tr></tbody></table></div>
<footer><button>新建</button><button>删除</button><button>复制</button><button class="ok">确定</button><button>取消</button></footer>`);

define('drawing-canvas', `:host{display:block;position:relative;flex:1;background:#000;overflow:hidden}
property-editor{position:absolute;left:29px;top:6px}stirrup-dialog{position:absolute;left:423px;top:40px}
ui-icon{position:absolute;left:929px;top:346px;width:21px;height:21px}.m{position:absolute;left:53px;top:494px}`,
  `<svg class="m" width="60" height="14"><path d="M0 0h4v14H0z" fill="#0f0"/><path d="M39 6l5-5 5 5M39 13.500h3" stroke="red" fill="none"/></svg><property-editor></property-editor><stirrup-dialog></stirrup-dialog><ui-icon name="recycle"></ui-icon>`);

define('red-marks', `:host{position:absolute;inset:0;pointer-events:none;z-index:5}svg{display:block;width:100%;height:100%}p{position:absolute;left:513px;top:479px;margin:0;font-size:16px;line-height:20px;color:red;white-space:nowrap}`,
  `<svg fill="none" stroke="red"><ellipse cx="206" cy="163" rx="38" ry="20"/><ellipse cx="465" cy="406" rx="112" ry="16"/><circle cx="539" cy="405" r="10"/><ellipse cx="775" cy="186" rx="48" ry="16"/><ellipse cx="764" cy="237" rx="24" ry="15"/><ellipse cx="1023" cy="241" rx="31" ry="15"/>
<g fill="red" stroke="none"><path d="M212 181l216 178 4-3 10 23-25-7 4-7-111-96z"/><path d="M517 384l183-156 35-27-7-4 26-7-11 23-3-5-40 31-182 146z"/><path d="M744 206l3 18 5 1-4 10-6-12 3 1z"/><path d="M763 262l193-4v-6l21 12-21 10v-6z"/><path d="M1005 267l3-8-2-3 9-4-1 12-3-2z"/><path d="M535 402l8-5 2 11 4 4-11 3 2-8z"/><path d="M538 476l-3-39h-4l8-16 8 16h-5l-3 39z"/></g></svg><p>后面有三点，点击</p>`);

const B = (i, t = '', a = '') => `<tool-button icon="${i}" ${a}>${t}</tool-button>`;
const S = '<tool-sep></tool-sep>', A = '<tool-arrow></tool-arrow>', AT = '<tool-arrow tight></tool-arrow>';
define('rebar-app', `:host{display:flex;flex-direction:column;height:100vh;position:relative;overflow:hidden}
.cap{height:4px;background:linear-gradient(#6f8fe0,#7b99e6);flex:none}menu-bar{flex:none}.row{display:flex;align-items:flex-start;gap:2px;flex:none;height:26px;padding-left:2px;overflow:hidden}.top{height:27px}
main{display:flex;flex:1;min-height:0}.work{flex:1;min-width:0;display:flex;flex-direction:column}`,
  () => `<div class="cap"></div><menu-bar></menu-bar>
<div class="row top"><tool-strip>${B('doc', '', 'title="新建"') + B('open', '', 'title="打开"') + A + B('save', '', 'title="保存"') + S + B('undo', '', 'title="撤销"') + A}<tool-more></tool-more></tool-strip>
<tool-strip>${B('define', '定义') + B('sum', '汇总计算') + B('slab', '平齐板顶') + B('binoc', '查找图元') + B('glasses', '查看钢筋量') + B('batch', '批量选择') + B('rebar3d', '钢筋三维', 'off') + B('lock', '锁定') + B('unlock', '解锁')}<tool-more wide></tool-more></tool-strip>
<tool-strip grow><tool-combo icon="rect2d" value="二维"></tool-combo>${B('cube', '俯视') + A + B('orbit', '动态观察') + B('local3d', '局部三维') + S + B('full', '全屏') + B('zoom', '缩放') + A}</tool-strip></div>
<main><nav-panel></nav-panel><list-panel></list-panel><div class="work">
<div class="row"><tool-strip>${B('brush', '删除') + S + B('copy2', '复制') + B('mirror', '镜像') + S + B('move', '移动') + B('rotate', '旋转') + S + B('extend', '延伸', 'off') + B('trim', '修剪', 'off') + S + B('brk', '打断', 'off') + B('merge', '合并', 'off') + B('split', '分割', 'off') + S + B('align', '对齐') + AT + B('offset', '偏移', 'off') + B('stretch', '拉伸', 'off') + S + B('grip', '设置夹点', 'off')}</tool-strip></div>
<div class="row"><tool-strip><tool-combo first value="首层"></tool-combo><tool-combo value="柱"></tool-combo><tool-combo value="构造柱"></tool-combo><tool-combo value="GZ-1"></tool-combo>${S + B('props', '属性', 'pressed') + B('editbar', '编辑钢筋') + B('list', '构件列表', 'pressed') + B('dropper', '拾取构件')}</tool-strip>
<tool-strip grow>${B('axis2', '两点') + B('axisp', '平行') + B('axisa', '点角') + A + B('axis3', '三点辅轴') + A + B('brush', '删除辅轴') + B('ruler', '尺')}</tool-strip></div>
<div class="row"><tool-strip>${B('cursor', '选择', 'pressed') + A + S + B('point', '点') + B('rotpt', '旋转点') + S + B('smart', '智能布置') + A + S + B('insitu', '原位标注') + B('coltable', '图元柱表') + B('colend', '调整柱端头') + B('wallcol', '按墙位置绘制柱') + A + B('check', '查改标注') + A + B('autocol', '自动生成构造柱')}</tool-strip></div>
<drawing-canvas></drawing-canvas></div></main><red-marks></red-marks>`);
</script>
</body>
</html>
